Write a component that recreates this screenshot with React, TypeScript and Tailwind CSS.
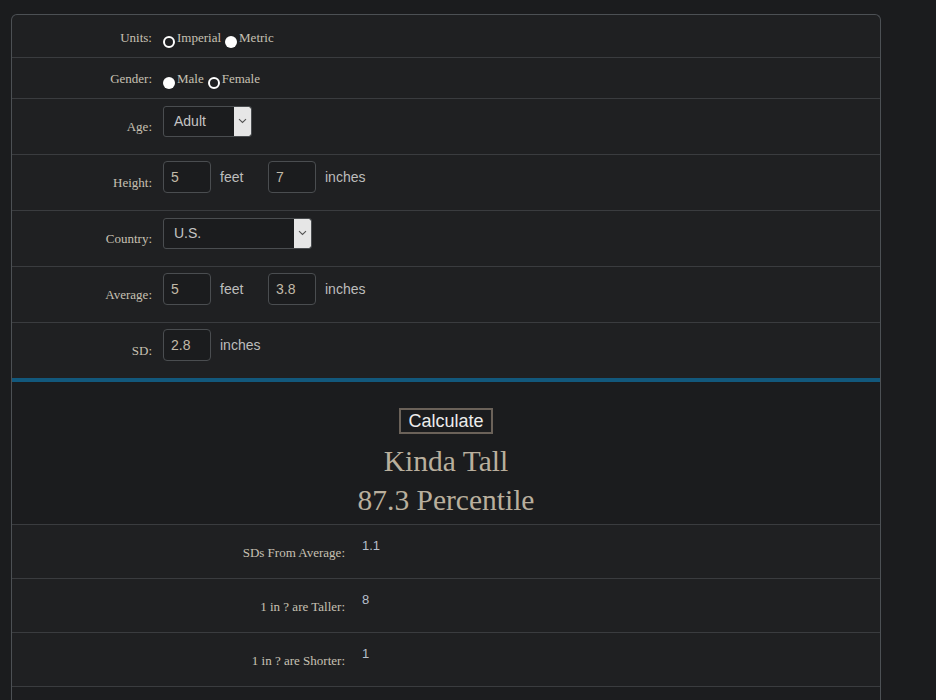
import React from "react";

const serif = { fontFamily: '"Liberation Serif", "Times New Roman", serif' };

function Radio({ checked }: { checked?: boolean }) {
  return checked ? (
    <span className="inline-block w-[12px] h-[12px] rounded-full border-[2px] border-white bg-[#1f2022] mt-[6px] shrink-0" />
  ) : (
    <span className="inline-block w-[12px] h-[12px] rounded-full bg-white mt-[6px] shrink-0" />
  );
}

function Chevron() {
  return (
    <svg width="9" height="6" viewBox="0 0 9 6" fill="none">
      <path d="M1 1.2 L4.5 4.5 L8 1.2" stroke="#555" strokeWidth="1.1" />
    </svg>
  );
}

function Select({ value, width }: { value: string; width: string }) {
  return (
    <div className={`flex h-[31px] rounded-[3px] border border-[#4a4d50] bg-[#1b1c1e] overflow-hidden ${width}`}>
      <div className="flex-1 flex items-center pl-[10px] text-[14px] text-[#c4c4c4] font-['Liberation_Sans',Arial,sans-serif]">
        {value}
      </div>
      <div className="w-[17px] bg-[#e6e6e6] flex items-center justify-center rounded-r-[2px]">
        <Chevron />
      </div>
    </div>
  );
}

function Input({ value }: { value: string }) {
  return (
    <div className="w-[48px] h-[32px] rounded-[4px] border border-[#4a4d50] bg-[#1b1c1e] flex items-center pl-[7px] text-[14px] text-[#c2baa8] font-['Liberation_Sans',Arial,sans-serif]">
      {value}
    </div>
  );
}

function Unit({ children, w }: { children: React.ReactNode; w?: string }) {
  return (
    <span className={`ml-[9px] text-[14px] text-[#bdbdbd] font-['Liberation_Sans',Arial,sans-serif] ${w ?? ""}`}>
      {children}
    </span>
  );
}

function FormRow({ label, children }: { label: string; children: React.ReactNode }) {
  return (
    <div className="flex border-b border-[#3a3c3f] h-[56px] pt-[6px]">
      <div
        className="w-[140px] text-right text-[13px] text-[#c7c0b3] leading-[15px] pt-[14px]"
        style={serif}
      >
        {label}
      </div>
      <div className="ml-[11px] flex items-center h-[32px]">{children}</div>
    </div>
  );
}

function ResultRow({ label, value }: { label: string; value: string }) {
  return (
    <div className="flex border-b border-[#3a3c3f] h-[54px] bg-[#1f2022]">
      <div
        className="w-[333px] text-right text-[13px] text-[#c7c0b3] leading-[15px] pt-[20px]"
        style={serif}
      >
        {label}
      </div>
      <div className="ml-[17px] pt-[13px] text-[13px] leading-[15px] text-[#b6bfcb] font-['Liberation_Sans',Arial,sans-serif]">
        {value}
      </div>
    </div>
  );
}

export default function App() {
  return (
    <div className="min-h-[700px] bg-[#1b1c1e] pt-[14px] pl-[11px] overflow-hidden">
      <div className="w-[870px] border-x border-t border-[#4c5054] rounded-t-[6px] bg-[#1f2022] h-[700px]">
        {/* Units */}
        <div className="flex border-b border-[#3a3c3f] h-[43px]">
          <div className="w-[140px] text-right text-[13px] text-[#c7c0b3] leading-[15px] pt-[15px]" style={serif}>
            Units:
          </div>
          <div className="ml-[11px] flex items-start pt-[15px] text-[13px] leading-[15px] text-[#c7c0b3]" style={serif}>
            <Radio checked />
            <span className="ml-[2px]">Imperial</span>
            <span className="ml-[4px]"><Radio /></span>
            <span className="ml-[2px]">Metric</span>
          </div>
        </div>
        {/* Gender */}
        <div className="flex border-b border-[#3a3c3f] h-[41px]">
          <div className="w-[140px] text-right text-[13px] text-[#c7c0b3] leading-[15px] pt-[13px]" style={serif}>
            Gender:
          </div>
          <div className="ml-[11px] flex items-start pt-[13px] text-[13px] leading-[15px] text-[#c7c0b3]" style={serif}>
            <Radio />
            <span className="ml-[2px]">Male</span>
            <span className="ml-[4px]"><Radio checked /></span>
            <span className="ml-[2px]">Female</span>
          </div>
        </div>
        <FormRow label="Age:">
          <Select value="Adult" width="w-[89px]" />
        </FormRow>
        <FormRow label="Height:">
          <Input value="5" />
          <Unit w="w-[48px]">feet</Unit>
          <Input value="7" />
          <Unit>inches</Unit>
        </FormRow>
        <FormRow label="Country:">
          <Select value="U.S." width="w-[149px]" />
        </FormRow>
        <FormRow label="Average:">
          <Input value="5" />
          <Unit w="w-[48px]">feet</Unit>
          <Input value="3.8" />
          <Unit>inches</Unit>
        </FormRow>
        <div className="flex h-[55px] pt-[6px]">
          <div className="w-[140px] text-right text-[13px] text-[#c7c0b3] leading-[15px] pt-[14px]" style={serif}>
            SD:
          </div>
          <div className="ml-[11px] flex items-center h-[32px]">
            <Input value="2.8" />
            <Unit>inches</Unit>
          </div>
        </div>
        <div className="h-[4px] bg-[#12587c]" />
        {/* results */}
        <div className="bg-[#1b1c1e] flex flex-col items-center pt-[26px] pb-[4px] border-b border-[#3a3c3f]">
          <button className="h-[26px] w-[94px] border-2 border-[#6b6259] bg-[#1b1c1e] text-[18px] leading-[20px] text-[#ececec] font-['Liberation_Sans',Arial,sans-serif]">
            Calculate
          </button>
          <div className="mt-[8px] text-[29.5px] leading-[39px] text-[#b9af9d] text-center" style={serif}>
            <div>Kinda Tall</div>
            <div>87.3 Percentile</div>
          </div>
        </div>
        <ResultRow label="SDs From Average:" value="1.1" />
        <ResultRow label="1 in ? are Taller:" value="8" />
        <ResultRow label="1 in ? are Shorter:" value="1" />
        <div className="bg-[#1c1d1f] h-[40px]" />
      </div>
    </div>
  );
}
